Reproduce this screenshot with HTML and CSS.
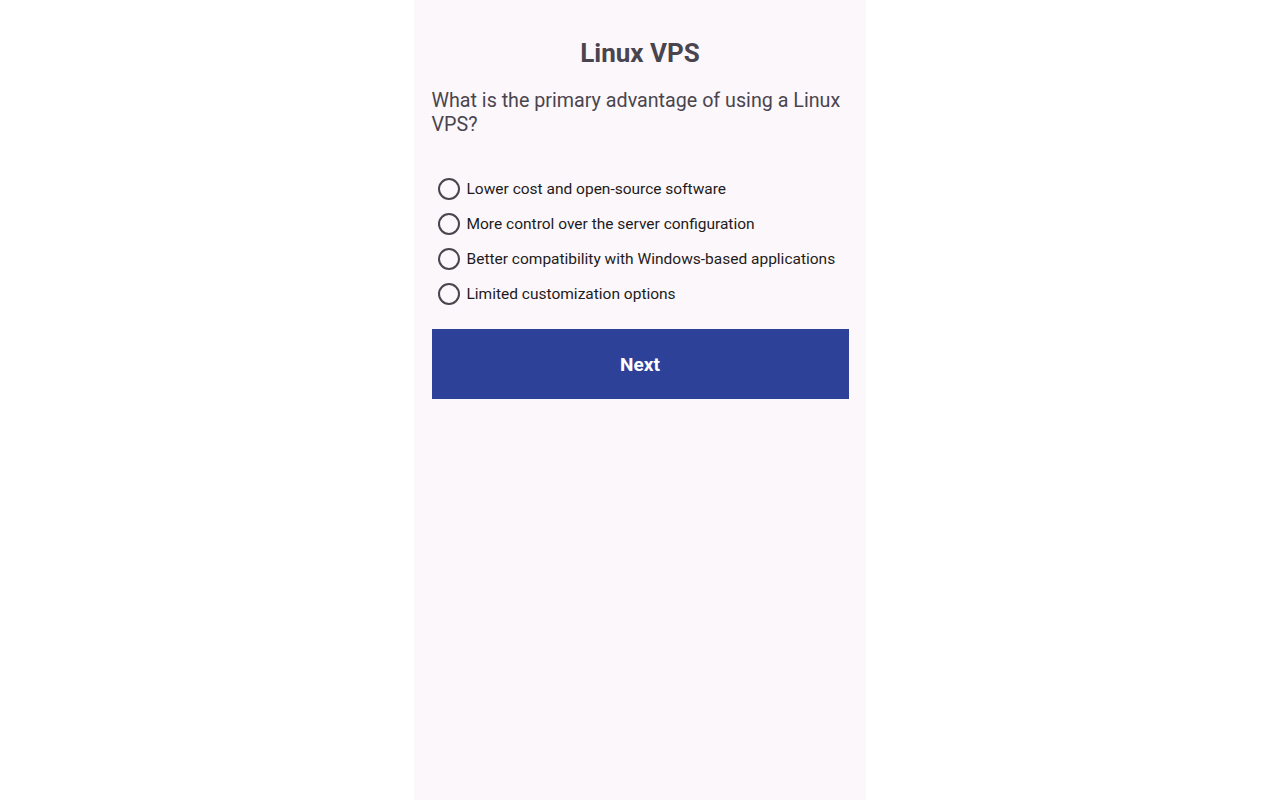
FILE: index.html
```html
<!DOCTYPE html>
<html lang="en">
<head>
    <meta charset="UTF-8">
    <meta name="viewport" content="width=device-width, initial-scale=1.0">
    <title>Linux VPS Quiz</title>
    <link rel="stylesheet" href="styles.css">
</head>
<body>
    <div class="screen">
        <h1 class="quiz-title">Linux VPS</h1>
        <p class="question">What is the primary advantage of using a Linux VPS?</p>

        <ul class="options">
            <li>
                <label class="option">
                    <span class="radio"></span>
                    <span class="option-text">Lower cost and open-source software</span>
                </label>
            </li>
            <li>
                <label class="option">
                    <span class="radio"></span>
                    <span class="option-text">More control over the server configuration</span>
                </label>
            </li>
            <li>
                <label class="option">
                    <span class="radio"></span>
                    <span class="option-text">Better compatibility with Windows-based applications</span>
                </label>
            </li>
            <li>
                <label class="option">
                    <span class="radio"></span>
                    <span class="option-text">Limited customization options</span>
                </label>
            </li>
        </ul>

        <button class="next-btn">Next</button>
    </div>
</body>
</html>
```

FILE: styles.css
```css
* {
    margin: 0;
    padding: 0;
    box-sizing: border-box;
    font-family: Roboto, "Liberation Sans", sans-serif;
}

body {
    background-color: #ffffff;
    display: flex;
    justify-content: center;
    min-height: 100vh;
}

.screen {
    width: 452px;
    min-height: 800px;
    background-color: #fcf7fb;
    padding: 36px 17.5px 0;
}

.quiz-title {
    font-size: 26px;
    font-weight: bold;
    text-align: center;
    color: #49454f;
    line-height: 34px;
}

.question {
    margin-top: 19px;
    font-size: 19.7px;
    line-height: 23.5px;
    color: #49454f;
}

.options {
    list-style: none;
    margin-top: 35px;
    padding-left: 6px;
}

.option {
    display: flex;
    align-items: center;
    height: 35px;
    cursor: pointer;
}

.radio {
    width: 22px;
    height: 22px;
    border: 2px solid #49454f;
    border-radius: 50%;
    flex-shrink: 0;
}

.option-text {
    margin-left: 7px;
    font-size: 15.5px;
    color: #1d1b20;
}

.next-btn {
    display: block;
    width: 100%;
    height: 70px;
    margin-top: 18px;
    border: none;
    background-color: #2d4199;
    color: #ffffff;
    font-size: 19px;
    font-weight: bold;
    cursor: pointer;
}
```
